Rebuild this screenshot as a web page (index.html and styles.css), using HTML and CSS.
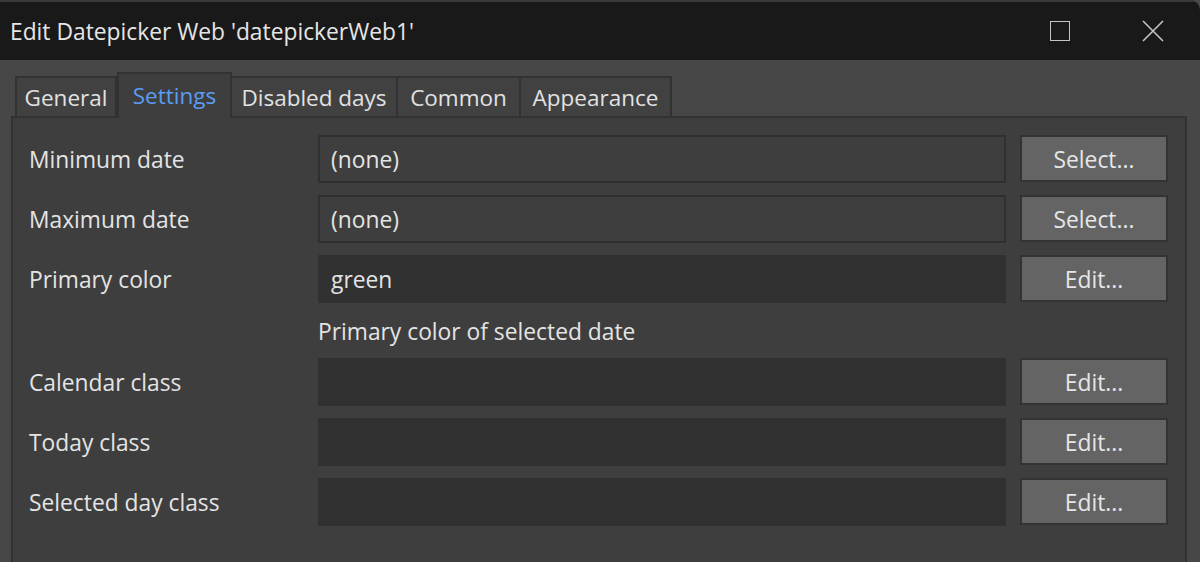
FILE: index.html
```html
<!DOCTYPE html>
<html>
<head>
<meta charset="utf-8">
<link rel="stylesheet" href="styles.css">
</head>
<body>
<div class="window">
  <div class="titlebar">
    <div class="title">Edit Datepicker Web 'datepickerWeb1'</div>
    <div class="controls">
      <svg class="ctl max" width="20" height="20" viewBox="0 0 20 20"><rect x="0.5" y="0.5" width="19" height="19" fill="none" stroke="#c4c4c4" stroke-width="1"/></svg>
      <svg class="ctl close" width="22" height="22" viewBox="0 0 22 22"><path d="M1 1L21 21M21 1L1 21" stroke="#c4c4c4" stroke-width="1.6" fill="none"/></svg>
    </div>
  </div>
  <div class="body">
    <div class="tabs">
      <div class="tab t-general">General</div>
      <div class="tab active t-settings">Settings</div>
      <div class="tab t-disabled">Disabled days</div>
      <div class="tab t-common">Common</div>
      <div class="tab t-appearance">Appearance</div>
    </div>
    <div class="panel">
      <div class="row">
        <div class="label">Minimum date</div>
        <div class="field ro">(none)</div>
        <div class="btn">Select...</div>
      </div>
      <div class="row">
        <div class="label">Maximum date</div>
        <div class="field ro">(none)</div>
        <div class="btn">Select...</div>
      </div>
      <div class="row">
        <div class="label">Primary color</div>
        <div class="field">green</div>
        <div class="btn">Edit...</div>
      </div>
      <div class="hint">Primary color of selected date</div>
      <div class="row">
        <div class="label">Calendar class</div>
        <div class="field"></div>
        <div class="btn">Edit...</div>
      </div>
      <div class="row">
        <div class="label">Today class</div>
        <div class="field"></div>
        <div class="btn">Edit...</div>
      </div>
      <div class="row">
        <div class="label">Selected day class</div>
        <div class="field"></div>
        <div class="btn">Edit...</div>
      </div>
    </div>
  </div>
</div>
</body>
</html>
```

FILE: styles.css
```css
* { box-sizing: border-box; }
html, body {
  margin: 0;
  padding: 0;
  background: #4a4a4a;
  width: 1200px;
  height: 562px;
  overflow: hidden;
  font-family: "Open Sans", "Noto Sans", sans-serif;
  color: #e4e4e4;
}
.window {
  width: 1200px;
  height: 562px;
  background: #474747;
  border-top-right-radius: 10px;
  overflow: hidden;
}
.titlebar {
  height: 60px;
  background: #191919;
  border-top: 2px solid #3a3a3a;
  display: flex;
  align-items: center;
  justify-content: space-between;
  padding-left: 10px;
}
.title {
  font-size: 22.8px;
  color: #e6e6e6;
  padding-top: 1px;
}
.controls {
  display: flex;
  align-items: center;
  padding-right: 36px;
}
.ctl { display: block; }
.max { margin-right: 72px; }
.body {
  padding: 12px 13px 0 11px;
}
.tabs {
  display: flex;
  align-items: flex-end;
  padding-left: 4px;
  height: 44px;
}
.tab {
  height: 40px;
  border: 2px solid #323232;
  border-bottom: none;
  background: #414141;
  font-size: 22.5px;
  line-height: 39px;
  text-align: center;
  color: #e2e2e2;
  white-space: nowrap;
}
.tab + .tab { border-left: none; }
.t-general { width: 102px; }
.t-settings { width: 115px; }
.t-disabled { width: 166px; }
.t-common { width: 123px; }
.t-appearance { width: 151px; }
.tab.active {
  height: 46px;
  margin-bottom: -2px;
  background: #3e3e3e;
  color: #5a9cf3;
  border-left: 2px solid #323232;
  line-height: 44px;
  position: relative;
  z-index: 1;
}
.tab.active + .tab { border-left: none; }
.panel {
  border-top: 2px solid #323232;
  border-left: 2px solid #323232;
  border-right: 2px solid #323232;
  background: #3e3e3e;
  height: 460px;
  padding: 17px 17px 0 16px;
}
.row {
  display: flex;
  align-items: stretch;
  height: 48px;
  margin-bottom: 12px;
}
.label {
  width: 289px;
  font-size: 22.8px;
  line-height: 50px;
}
.field {
  width: 688px;
  background: #313131;
  font-size: 22.8px;
  line-height: 50px;
  padding-left: 13px;
}
.field.ro {
  background: #3e3e3e;
  border: 2px solid #303030;
  line-height: 46px;
  padding-left: 11px;
}
.btn {
  width: 148px;
  margin-left: 14px;
  background: #646464;
  border: 2px solid #333333;
  font-size: 22.8px;
  line-height: 45px;
  text-align: center;
  height: 47px;
  color: #e6e6e6;
}
.hint {
  padding-left: 289px;
  font-size: 22.8px;
  height: 55px;
  line-height: 57px;
  margin-top: -12px;
}
```
